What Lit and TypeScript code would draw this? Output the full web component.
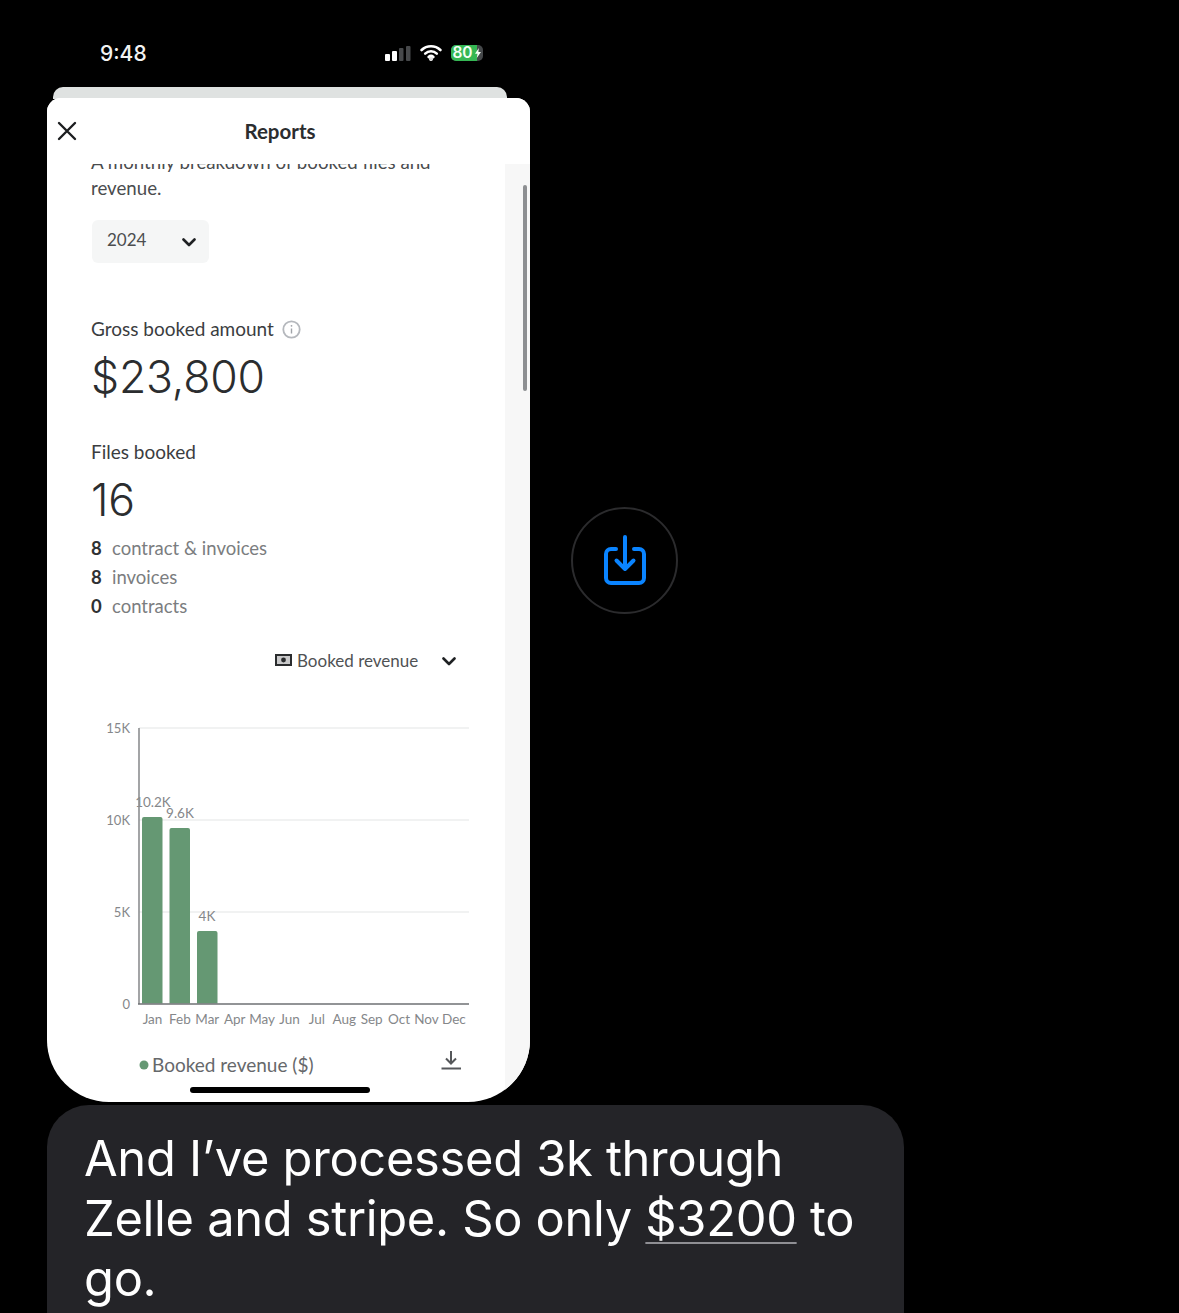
import { LitElement, html, css, svg } from "lit";
import { customElement } from "lit/decorators.js";

const months = ["Jan","Feb","Mar","Apr","May","Jun","Jul","Aug","Sep","Oct","Nov","Dec"];
const axis = [["15K",728],["10K",820],["5K",912],["0",1003.5]] as const;
const bars = [
  { x: 142, w: 20.5, top: 817, label: "10.2K", lx: 153, ly: 805 },
  { x: 169.5, w: 20.5, top: 828, label: "9.6K", lx: 180, ly: 816 },
  { x: 197, w: 20.5, top: 931, label: "4K", lx: 207, ly: 919 },
];

@customElement("app-root")
export class AppRoot extends LitElement {
  static styles = css`
    :host { display: block; width: 1179px; height: 1313px; overflow: hidden; background: #000; font-family: Lato, "Liberation Sans", sans-serif; }
    .top { display: flex; align-items: flex-start; }
    .phone { width: 483px; margin-left: 47px; flex: none; }
    .status { height: 87px; display: flex; align-items: center; padding: 18px 0 0 53px; box-sizing: border-box; color: #f2f2f2; font: 500 21px Inter, sans-serif; }
    .status > span { margin-top: 2px; }
    .status-icons { display: flex; align-items: center; margin-left: 238px; gap: 9px; }
    .batt { position: relative; width: 32px; height: 16px; border-radius: 5px; background: #45484a; overflow: hidden; }
    .batt-fill { width: 26px; height: 16px; background: #35b754; display: flex; align-items: center; padding-left: 2px; box-sizing: border-box; color: #f4fff4; font: 600 15.5px Inter, sans-serif; letter-spacing: -0.2px; }
    .bolt { position: absolute; left: 24px; top: 3px; }
    .peek { height: 12px; margin: 0 23px 0 6px; background: #dfe2e1; border-radius: 10px 10px 0 0; }
    .sheet { position: relative; height: 1004px; margin-top: -1px; background: #fff; border-radius: 14px 14px 62px 62px; overflow: hidden; display: flex; flex-direction: column; color: #3b3d3f; }
    .head { flex: none; height: 66px; background: #fff; position: relative; z-index: 1; display: flex; align-items: center; justify-content: center; font-size: 20.5px; font-weight: 700; color: #2b2d2f; padding-right: 17px; box-sizing: border-box; }
    .close { position: absolute; left: 10px; top: 23px; }
    .main { flex: 1; display: flex; min-height: 0; }
    .content { flex: 1; padding-left: 44px; min-width: 0; font-size: 18.5px; }
    .gutter { width: 25px; flex: none; background: #f7f7f7; position: relative; }
    .thumb { width: 4px; height: 206px; margin: 21px 0 0 18px; background: #8d8f92; border-radius: 2px; }
    .intro { margin: -15px 0 0; line-height: 26px; width: 380px; color: #4a4c4e; font-size: 18.7px; }
    .select { margin-top: 19px; margin-left: 1px; width: 117px; height: 43px; background: #f5f6f6; border-radius: 6px; display: flex; align-items: center; justify-content: space-between; padding: 0 13px 5px 15px; box-sizing: border-box; font-size: 17px; color: #4b4d4f; }
    .select svg { margin-top: 7px; }
    .label { display: flex; align-items: center; gap: 8px; line-height: 24px; font-size: 19px; }
    .gross { margin-top: 54px; }
    .big { font: 300 44.5px/60px Inter, sans-serif; letter-spacing: -0.2px; color: #2b2d2f; margin-top: 6px; }
    .files { margin-top: 33px; }
    .count { margin-top: 6px; }
    .rows { margin-top: 4px; }
    .row { display: flex; line-height: 29px; color: #7b7d80; gap: 10px; }
    .row b { color: #2f3133; width: 11px; font-weight: 700; }
    .picker { display: flex; align-items: center; height: 24px; margin: 27px 0 0 184px; font-size: 17px; color: #505254; }
    .picker span { margin-left: 5px; width: 145px; }
    .picker span + svg { margin-top: 3px; }
    .chart { display: block; margin-top: 43px; }
    .chart text { font-family: Lato, "Liberation Sans", sans-serif; font-size: 13.5px; fill: #85878a; }
    .chart .yl { text-anchor: end; font-size: 13px; }
    .chart .ml { text-anchor: middle; }
    .chart .legend { font-size: 19px; fill: #66686b; }
    .home { position: absolute; left: 143px; bottom: 9px; width: 180px; height: 6px; border-radius: 3px; background: #000; z-index: 2; }
    .share { margin: 507px 0 0 41px; width: 107px; height: 107px; box-sizing: border-box; border: 2px solid #2b2b2d; border-radius: 50%; flex: none; display: flex; align-items: center; justify-content: center; }
    .bubble { margin: 3px 0 0 47px; width: 857px; height: 260px; box-sizing: border-box; background: #242428; border-radius: 42px; padding: 24px 37px; color: #fff; font: 400 48.8px/60px Inter, sans-serif; letter-spacing: -0.3px; }
    .bubble u { text-decoration-color: #8f8f94; text-decoration-thickness: 2px; text-underline-offset: 6px; }
  `;

  private chevron() {
    return html`<svg width="14" height="9" viewBox="0 0 14 9" fill="none"><path d="M1.5 1.5 7 7l5.5-5.5" stroke="#1f2123" stroke-width="2.6" stroke-linecap="round" stroke-linejoin="round"/></svg>`;
  }

  private chart() {
    return html`<svg class="chart" width="400" height="370" viewBox="91 715 400 370">
      ${axis.slice(0, 3).map(([, y]) => svg`<line x1="139" x2="469" y1=${y} y2=${y} stroke="#eceeee" stroke-width="1.5"/>`)}
      ${axis.map(([t, y]) => svg`<text class="yl" x="130" y=${y + 5}>${t}</text>`)}
      ${bars.map(b => svg`
        <path d="M${b.x} 1003.5V${b.top + 2}a2 2 0 0 1 2-2h${b.w - 4}a2 2 0 0 1 2 2V1003.5z" fill="#659873"/>
        <text class="ml" x=${b.lx} y=${b.ly + 2}>${b.label}</text>`)}
      <line x1="139" x2="139" y1="728" y2="1004" stroke="#8c8e90" stroke-width="1.6"/>
      <line x1="138" x2="469" y1="1004" y2="1004" stroke="#6e7073" stroke-width="1.6"/>
      ${months.map((m, i) => svg`<text class="ml" x=${152.5 + i * 27.4} y="1024">${m}</text>`)}
      <circle cx="144" cy="1065" r="4.5" fill="#659873"/>
      <text class="legend" x="152" y="1072">Booked revenue ($)</text>
      <path d="M451 1051v12M446 1058.500l5 5 5-5" fill="none" stroke="#55575a" stroke-width="2"/>
      <line x1="441.5" x2="461" y1="1068.5" y2="1068.5" stroke="#55575a" stroke-width="2"/>
    </svg>`;
  }

  render() {
    return html`
      <div class="top">
        <div class="phone">
          <div class="status">
            <span>9:48</span>
            <div class="status-icons">
              <svg width="26" height="16" viewBox="0 0 26 16"><rect x="0" y="9" width="5" height="7" rx="1" fill="#fff"/><rect x="7" y="6" width="5" height="10" rx="1" fill="#fff"/><rect x="14" y="3" width="4.5" height="13" rx="1" fill="#47494b"/><rect x="21" y="1" width="4.5" height="15" rx="1" fill="#47494b"/></svg>
              <svg width="22" height="17" viewBox="0 0 22 17" fill="none" stroke="#fff" stroke-width="2.6" stroke-linecap="round"><path d="M1.6 6a13.5 13.5 0 0 1 18.8 0"/><path d="M5.2 9.6a8.4 8.4 0 0 1 11.6 0"/><path d="M8.6 13a3.6 3.6 0 0 1 4.8 0"/><circle cx="11" cy="15" r=".7" fill="#fff"/></svg>
              <div class="batt">
                <div class="batt-fill">80</div>
                <svg class="bolt" width="6" height="10" viewBox="0 0 6 10"><path d="M3.800 0 0 5.800h2.400L1.800 10 6 4H3.400z" fill="#f4fff4"/></svg>
              </div>
            </div>
          </div>
          <div class="peek"></div>
          <div class="sheet">
            <div class="head">
              <svg class="close" width="20" height="20" viewBox="0 0 20 20"><path d="M2 2l16 16M18 2 2 18" stroke="#1c1e20" stroke-width="2.4" stroke-linecap="round"/></svg>
              Reports
            </div>
            <div class="main">
              <div class="content">
                <p class="intro">A monthly breakdown of booked files and revenue.</p>
                <div class="select">2024 ${this.chevron()}</div>
                <div class="label gross">Gross booked amount
                  <svg width="19" height="19" viewBox="0 0 19 19" fill="none"><circle cx="9.5" cy="9.5" r="8.2" stroke="#b5b8bd" stroke-width="1.8"/><path d="M9.500 8.500v5" stroke="#a0a3a8" stroke-width="1.4"/><circle cx="9.500" cy="5.800" r=".9" fill="#a0a3a8"/></svg>
                </div>
                <div class="big">$23,800</div>
                <div class="label files">Files booked</div>
                <div class="big count">16</div>
                <div class="rows">
                  <div class="row"><b>8</b>contract &amp; invoices</div>
                  <div class="row"><b>8</b>invoices</div>
                  <div class="row"><b>0</b>contracts</div>
                </div>
                <div class="picker">
                  <svg width="17" height="12" viewBox="0 0 17 12"><rect x="1" y="1" width="15" height="10" fill="none" stroke="#2a2c2e" stroke-width="2"/><rect x="1" y="1" width="15" height="10" fill="#2a2c2e" opacity=".25"/><circle cx="8.500" cy="6" r="2.400" fill="#2a2c2e"/></svg>
                  <span>Booked revenue</span>
                  ${this.chevron()}
                </div>
                ${this.chart()}
              </div>
              <div class="gutter"><div class="thumb"></div></div>
            </div>
            <div class="home"></div>
          </div>
        </div>
        <div class="share">
          <svg width="46" height="54" viewBox="602 532 46 54" fill="none" stroke="#0a84ff" stroke-width="4" stroke-linecap="round" stroke-linejoin="round"><path d="M616 547h-5a5 5 0 0 0-5 5v24a5 5 0 0 0 5 5h28a5 5 0 0 0 5-5v-24a5 5 0 0 0-5-5h-5"/><path d="M625 535v32M616.500 558.500l8.500 8.500 8.500-8.500"/></svg>
        </div>
      </div>
      <div class="bubble">And I’ve processed 3k through Zelle and stripe. So only <u>$3200</u> to go.</div>
    `;
  }
}
